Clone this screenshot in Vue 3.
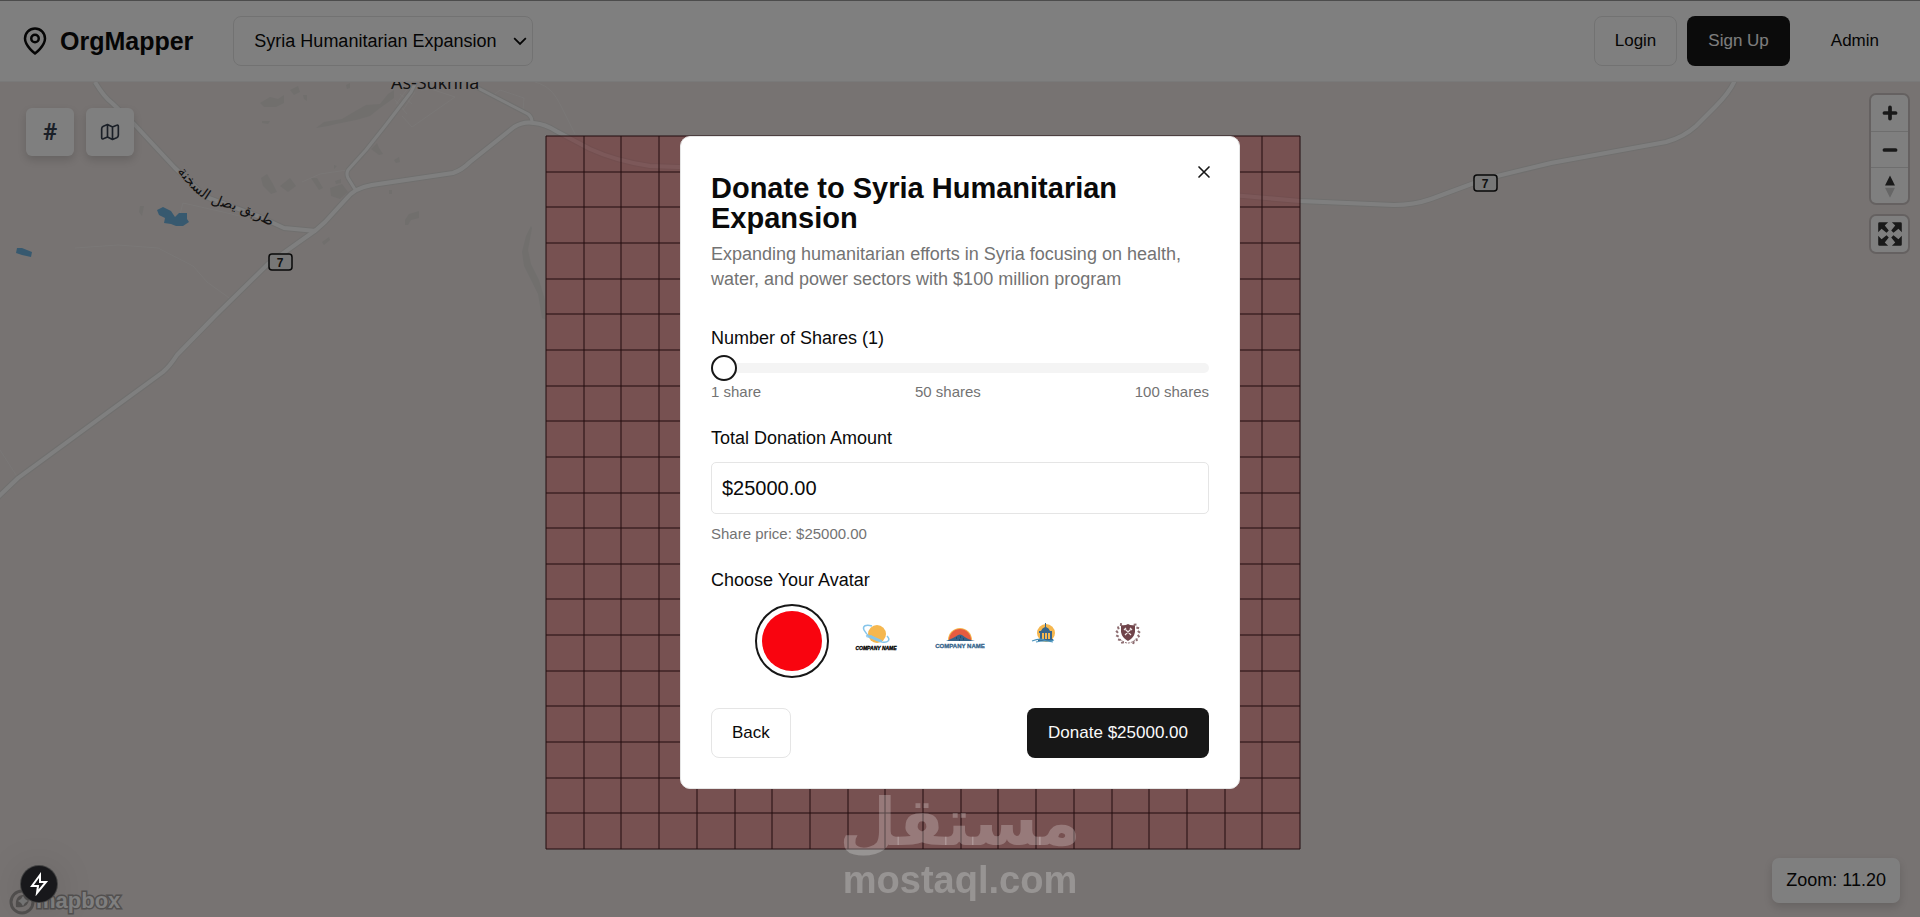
<script setup>
import { ref, computed } from 'vue'

const sharePrice = 25000
const shares = ref(1)
const avatar = ref('red')
const project = ref('Syria Humanitarian Expansion')
const avatars = [
  { id: 'red', name: 'Red circle' },
  { id: 'planet', name: 'Planet' },
  { id: 'sunrise', name: 'Sunrise' },
  { id: 'capitol', name: 'Capitol' },
  { id: 'crest', name: 'Crest' },
]
const total = computed(() => `$${(shares.value * sharePrice).toFixed(2)}`)

const grid = { x: 546, y: 136, w: 754, h: 713, n: 20, rows: 20 }
const columns = Array.from({ length: grid.n + 1 }, (_, i) => Math.round(grid.x + (i * grid.w) / grid.n))
const rows = Array.from({ length: grid.rows + 1 }, (_, i) => Math.round(grid.y + (i * grid.h) / grid.rows))
const laurels = [-150, -128, -106, -84, -62, -40, 40, 62, 84, 106, 128, 150]
</script>

<template>
  <div class="page">
    <header class="topbar">
      <div class="brand">
        <svg class="pin" viewBox="0 0 24 24" aria-hidden="true">
          <path d="M20 10c0 6-8 12-8 12s-8-6-8-12a8 8 0 0 1 16 0Z" />
          <circle cx="12" cy="10" r="3" />
        </svg>
        <span>OrgMapper</span>
      </div>
      <div class="picker">
        <select v-model="project" aria-label="Project">
          <option>Syria Humanitarian Expansion</option>
        </select>
        <svg class="chevron" viewBox="0 0 24 24" aria-hidden="true"><path d="M2 7l10 10L22 7" /></svg>
      </div>
      <nav class="account">
        <button class="btn outline">Login</button>
        <button class="btn solid">Sign Up</button>
        <button class="btn ghost">Admin</button>
      </nav>
    </header>

    <main class="map">
      <svg class="canvas" viewBox="0 82 1920 835" preserveAspectRatio="xMidYMid slice" role="img" aria-label="Map">
        <g class="terrain">
          <path d="M260 103l10-6 8 2 6-4v8l-8 4-12 0zM290 90l8-4 2 6-6 3zM303 95l4 0 0 6-3-2zM346 85l4-2 0 5-3 1zM262 121l8 0-2 3-6-1zM316 128l8-6 18-3 10-6 14-8 14-1 8-10 6-4 0 8-14 10-10 8-14 4-20 4-8 2zM261 178l6-4 6 10 4 8-6 2-8-8zM280 186l10-8 6 8-8 6zM311 178l6 0 6 10-4 2zM330 188l12-4 6 8-8 7-9-3zM371 149l6-6 2 5 4 6-4 1zM394 160l5-3 1 5-4 1zM334 165l3 1-3 3zM389 190l3 0 0 4-3 0zM405 220l4-6 10-3 0 7-8 2-3 5-3 0zM322 242l7-5 1 3-6 5zM140 206l4 0-2 10-3-4zM335 181l6-2 0 4-5 1z" />
          <path d="M531 226l-5 10-4 16 2 14 8 16 6 12 4 24 4 2-1-20-6-20-8-16-3-14 4-22z" />
        </g>
        <g class="lane">
          <path d="M535 82c14 4 20 12 26 24l14 28M402 116l10 11 43-30-24-8-10 1M478 88l14 8 8-6 24 8-1 12-8-4M302 182l18-8 27-4M180 214l3-11 40 9 42 10M75 248l43-3 40 3 35 18 14 16 25 18M0 450l18 28M395 100l12 14M400 94l12 10M408 88l-12 16M415 92l-12 18" />
        </g>
        <g v-for="layer in ['casing', 'road']" :key="layer" :class="layer">
          <g class="minor">
            <path d="M416 82 411 92 385 126 366 150 348 170 Q346 174 348 178L356 191" />
            <path d="M470 82 478 88 528 114 Q532 117 532 122" />
          </g>
          <path d="M95 82 Q104 97 112 103L135 125 175 168 206 197 258 216 284 228 316 231" />
          <path d="M-4 499 18 478 163 372 Q170 366 177 355L216 315 268 264 316 230 325 222 346 199 Q354 188 372 185L453 173 Q462 170 470 162L514 127 Q524 121 534 123 545 124 556 131L590 149 Q616 161 650 166L1060 180 1300 201 1394 205 Q1414 205 1431 199L1485 179 1551 163 1666 142 Q1684 137 1696 126L1715 107 Q1730 92 1735 80" />
        </g>
        <path class="water" d="M157 210l6-3 8 4 4 6 4-4 8 0 0 6 2 3-6 4-7 0-5-2-7-1 1-5-6-3zM17 248l5 0 10 4-1 5-9-2-6-2z" />
        <g class="place">
          <text x="391" y="89">As-Sukhna</text>
        </g>
        <path id="road-name" class="guide" d="M168 158 Q196 202 223 207T290 238" />
        <text class="road-label"><textPath href="#road-name" startOffset="48%" text-anchor="middle">طريق يصل السخنة</textPath></text>
        <g class="cells">
          <rect :x="grid.x" :y="grid.y" :width="grid.w" :height="grid.h" />
          <line v-for="x in columns" :key="`c${x}`" :x1="x" :x2="x" :y1="grid.y" :y2="grid.y + grid.h" />
          <line v-for="y in rows" :key="`r${y}`" :x1="grid.x" :x2="grid.x + grid.w" :y1="y" :y2="y" />
        </g>
        <g class="shield">
          <rect x="269" y="254" width="23" height="16" rx="3" />
          <text x="280" y="267">7</text>
          <rect x="1474" y="175" width="23" height="16" rx="3" />
          <text x="1485" y="188">7</text>
        </g>
      </svg>

      <div class="tools">
        <button class="tool" aria-label="Toggle grid">#</button>
        <button class="tool" aria-label="Map style">
          <svg viewBox="0 0 24 24" aria-hidden="true">
            <path d="M9 3 4 5Q2 6 2 8V19Q2 21 4 20L9 18 15 21 20 19Q22 18 22 16V5Q22 3 20 4L15 6zM9 3V18M15 6V21" />
          </svg>
        </button>
      </div>

      <div class="controls">
        <div class="group">
          <button aria-label="Zoom in"><svg viewBox="0 0 29 29"><path class="thick" d="M14.5 10v9M10 14.5h9" /></svg></button>
          <button aria-label="Zoom out"><svg viewBox="0 0 29 29"><path class="thick" d="M10 14.5h9" /></svg></button>
          <button aria-label="Reset north">
            <svg viewBox="0 0 29 29"><path d="M10.5 14l4-8 4 8z" /><path class="pale" d="M10.5 16l4 8 4-8z" /></svg>
          </button>
        </div>
        <div class="group">
          <button aria-label="Fullscreen">
            <svg viewBox="0 0 29 29">
              <g v-for="turn in [0, 90, 180, 270]" :key="turn" :transform="`rotate(${turn} 14.5 14.5)`">
                <path d="M5 6q0-1 1-1h7l-2.700 2.700 3.200 4-1.800 1.800-4-3.200L5 13z" />
              </g>
            </svg>
          </button>
        </div>
      </div>

      <div class="zoom-level">Zoom: 11.20</div>

      <svg class="mapbox" viewBox="0 0 120 30" role="img" aria-label="mapbox">
        <circle class="ring" cx="14" cy="15" r="11" />
        <path class="mark" d="M8 20c-1-8 2-12 7-12 5 0 7 4 5 8-2 4-7 5-12 4z" />
        <path class="star" d="M15 9l2 3 3 2-3 2-2 3-2-3-3-2 3-2z" />
        <text x="28" y="21">mapbox</text>
      </svg>
    </main>

    <div class="overlay">
      <section class="dialog" role="dialog" aria-modal="true" aria-labelledby="dialog-title">
        <button class="close" aria-label="Close">
          <svg viewBox="0 0 24 24"><path d="M18 6 6 18M6 6l12 12" /></svg>
        </button>
        <h2 id="dialog-title">Donate to Syria Humanitarian Expansion</h2>
        <p class="lead">Expanding humanitarian efforts in Syria focusing on health, water, and power sectors with $100 million program</p>

        <div class="field shares">
          <label for="shares">Number of Shares ({{ shares }})</label>
          <input id="shares" v-model.number="shares" type="range" min="1" max="100" />
          <div class="ticks"><span>1 share</span><span>50 shares</span><span>100 shares</span></div>
        </div>

        <div class="field amount">
          <label for="amount">Total Donation Amount</label>
          <input id="amount" type="text" :value="total" readonly />
          <p class="hint">Share price: ${{ sharePrice.toFixed(2) }}</p>
        </div>

        <fieldset class="field">
          <legend>Choose Your Avatar</legend>
          <div class="avatars">
            <label v-for="a in avatars" :key="a.id" class="avatar" :class="{ chosen: avatar === a.id }">
              <input v-model="avatar" type="radio" name="avatar" :value="a.id" :aria-label="a.name" />
              <svg viewBox="0 0 60 60" aria-hidden="true">
                <circle v-if="a.id === 'red'" cx="30" cy="30" r="30" fill="#f9040f" />
                <g v-else-if="a.id === 'planet'">
                  <circle cx="31" cy="23" r="9" fill="#f5b74f" />
                  <path d="M26 15c-6-2-10 0-8 4 3 6 10 10 18 12 6 1 9-2 5-6M20 25c4-1 9 2 16 5" fill="none" stroke="#86c5ea" stroke-width="1.5" />
                  <path d="M20 26l5-2 5 3-3 1z" fill="#86c5ea" />
                  <text x="30" y="39" class="logo-name slanted">COMPANY NAME</text>
                </g>
                <g v-else-if="a.id === 'sunrise'">
                  <path d="M18 29a12 12 0 0 1 24 0z" fill="#f5b74f" />
                  <path d="M19 29a11 11 0 0 1 22 0z" fill="#e65c40" />
                  <path d="M16 30q8-3 12-6 2-1 4 0 6 5 13 6z" fill="#36648b" />
                  <path d="M26 27h1M30 26h1M33 28h1M29 29h1" stroke="#16324c" />
                  <text x="30" y="37" class="logo-name wide">COMPANY NAME</text>
                </g>
                <g v-else-if="a.id === 'capitol'">
                  <circle cx="32" cy="22" r="9" fill="#f5b74f" />
                  <path d="M31 12h1v4q3 1 4 4h-9q1-3 4-4zM25 20h13v2H25zM26 22h2v7h-2zM30 22h1v7h-1zM33 22h1v7h-1zM36 22h2v7h-2zM24 28h15v2H24z" fill="#36648b" />
                  <path d="M18 30q8-3 12-1t10 0M22 31q8-2 17 0" fill="none" stroke="#4b94bd" stroke-width="1.2" />
                </g>
                <g v-else>
                  <path d="M23 14q4 1 7-1 3 2 7 1v7q-1 6-7 9-6-3-7-9z" fill="#70444a" />
                  <path d="M27 18l6 6M33 18l-6 6M28 17l-2 2M32 17l2 2" stroke="#f0e7e7" stroke-width="1.2" />
                  <path v-for="turn in laurels" :key="turn" :transform="`rotate(${turn} 30 22)`" d="M29 12l2-2" stroke="#8d6d71" stroke-width="2" />
                  <path d="M22 28q8 8 16 0" fill="none" stroke="#8d6d71" stroke-dasharray="2 1" />
                </g>
              </svg>
            </label>
          </div>
        </fieldset>

        <footer class="actions">
          <button class="btn outline">Back</button>
          <button class="btn solid">Donate {{ total }}</button>
        </footer>
      </section>
    </div>

    <button class="bolt" aria-label="Route status">
      <svg viewBox="0 0 24 24"><path d="M13 3 5 14h6l-1 7L19 10h-6z" /></svg>
    </button>

    <div class="watermark" aria-hidden="true">
      <span class="arabic" lang="ar">مستقل</span>
      <span class="latin">mostaql.com</span>
    </div>
  </div>
</template>

<style>
body {
  margin: 0;
}
</style>

<style scoped>
* {
  box-sizing: border-box;
}
.page {
  position: relative;
  display: flex;
  flex-direction: column;
  min-height: 100vh;
  overflow: hidden;
  font-family: "Liberation Sans", Arial, sans-serif;
  font-size: 18px;
  color: #0a0a0a;
}
button,
select,
input {
  font: inherit;
  color: inherit;
}
svg {
  display: block;
}
.topbar {
  position: relative;
  z-index: 1;
  display: flex;
  align-items: center;
  height: 82px;
  padding: 0 20px;
  background: #fff;
  border-top: 1px solid #999;
  border-bottom: 1px solid #f2f2f2;
}
.brand {
  display: flex;
  align-items: center;
  gap: 10px;
  font-size: 25px;
  font-weight: 700;
}
.pin {
  width: 30px;
  height: 30px;
  fill: none;
  stroke: currentColor;
  stroke-width: 2;
  stroke-linejoin: round;
}
.picker {
  position: relative;
  width: 300px;
  margin-left: 40px;
}
.picker select {
  appearance: none;
  width: 100%;
  height: 50px;
  padding: 0 20px;
  background: #fff;
  border: 1px solid #e5e5e5;
  border-radius: 8px;
}
.chevron {
  position: absolute;
  top: 18px;
  right: 6px;
  width: 14px;
  height: 14px;
  fill: none;
  stroke: #0a0a0a;
  stroke-width: 3;
  pointer-events: none;
}
.account {
  display: flex;
  gap: 10px;
  margin-left: auto;
}
.account .ghost {
  margin-left: 10px;
}
.btn {
  height: 50px;
  padding: 0 20px;
  border: 1px solid transparent;
  border-radius: 8px;
  background: transparent;
  font-size: 17px;
}
.outline {
  background: #fff;
  border-color: #e5e5e5;
}
.solid {
  background: #171717;
  color: #fafafa;
}
.map {
  position: relative;
  flex: 1;
  background: #eee6e4;
}
.canvas {
  position: absolute;
  inset: 0;
  width: 100%;
  height: 100%;
}
.terrain {
  fill: #e2dedb;
}
.lane {
  fill: none;
  stroke: #faf7f5;
  stroke-width: 1;
  opacity: 0.5;
}
.casing,
.road {
  fill: none;
  stroke-linejoin: round;
}
.casing {
  stroke: #e0dfdd;
  stroke-width: 6;
}
.road {
  stroke: #fff;
  stroke-width: 4;
}
.casing .minor {
  stroke-width: 5;
}
.road .minor {
  stroke-width: 3;
}
.water {
  fill: #6fb2de;
}
.place text,
.road-label {
  paint-order: stroke;
  stroke: #eee6e4;
  stroke-width: 2;
  fill: #222;
}
.place {
  font: 18px "Open Sans", sans-serif;
}
.guide {
  fill: none;
}
.road-label {
  font: 14px "DejaVu Sans", sans-serif;
}
.cells rect {
  fill: rgba(238, 60, 65, 0.4);
}
.cells line {
  stroke: #45181c;
  stroke-width: 1;
}
.shield rect {
  fill: #eee;
  stroke: #111;
  stroke-width: 1.5;
}
.shield text {
  font: bold 12px "Liberation Sans", sans-serif;
  text-anchor: middle;
  fill: #222;
}
.tools {
  position: absolute;
  top: 26px;
  left: 26px;
  display: flex;
  gap: 12px;
}
.tool {
  display: grid;
  place-items: center;
  width: 48px;
  height: 48px;
  padding: 0;
  border: 0;
  border-radius: 6px;
  background: #fff;
  color: #374151;
  font-family: Roboto, sans-serif;
  font-size: 24px;
  font-weight: 700;
  box-shadow: 0 4px 8px rgba(0, 0, 0, 0.14);
}
.tool svg {
  width: 20px;
  height: 20px;
  fill: none;
  stroke: currentColor;
  stroke-width: 2;
  stroke-linejoin: round;
}
.controls {
  position: absolute;
  top: 13px;
  right: 12px;
  display: flex;
  flex-direction: column;
  gap: 13px;
}
.group {
  width: 37px;
  border-radius: 5px;
  background: #fff;
  box-shadow: 0 0 0 2px rgba(0, 0, 0, 0.15);
}
.group button {
  display: block;
  width: 100%;
  height: 36px;
  padding: 0;
  border: 0;
  background: transparent;
}
.group button + button {
  border-top: 1px solid #ddd;
}
.group svg {
  width: 36px;
  height: 36px;
  margin: 0 auto;
  fill: #333;
}
.group .thick {
  fill: none;
  stroke: #333;
  stroke-width: 3;
  stroke-linecap: round;
}
.group .pale {
  fill: #ccc;
}
.zoom-level {
  position: absolute;
  right: 20px;
  bottom: 14px;
  padding: 10px 14px;
  border-radius: 7px;
  background: #fff;
  line-height: 25px;
  box-shadow: 0 4px 8px rgba(0, 0, 0, 0.14);
}
.mapbox {
  position: absolute;
  left: 8px;
  bottom: 0;
  width: 120px;
  height: 30px;
}
.mapbox .ring {
  fill: #eee6e4;
  stroke: #a5a09f;
  stroke-width: 3;
}
.mapbox .mark {
  fill: #a5a09f;
}
.mapbox .star {
  fill: #eee;
}
.mapbox text {
  font: bold 22px "Liberation Sans", sans-serif;
  fill: #fff;
  stroke: #a5a09f;
  stroke-width: 3;
  paint-order: stroke;
}
.overlay {
  position: fixed;
  inset: 0;
  z-index: 2;
  display: flex;
  align-items: center;
  justify-content: center;
  padding-top: 8px;
  background: rgba(0, 0, 0, 0.5);
}
.dialog {
  position: relative;
  width: 560px;
  padding: 36px 30px 30px;
  background: #fff;
  border: 1px solid #e5e5e5;
  border-radius: 10px;
}
.close {
  position: absolute;
  top: 25px;
  right: 25px;
  padding: 0;
  border: 0;
  background: transparent;
}
.close svg {
  width: 20px;
  height: 20px;
  fill: none;
  stroke: #171717;
  stroke-width: 2;
  stroke-linecap: round;
}
h2 {
  margin: 0;
  font-size: 29px;
  font-weight: 700;
  line-height: 30px;
}
.lead {
  margin: 9px 0 0;
  color: #737373;
  line-height: 25px;
}
.field {
  min-width: 0;
  margin: 0;
  padding: 0;
  border: 0;
}
.field > label,
legend {
  display: block;
  padding: 0;
  line-height: 18px;
}
.shares {
  margin-top: 37px;
}
input[type="range"] {
  appearance: none;
  display: block;
  width: 100%;
  height: 25px;
  margin: 8px 0 2px;
  background: transparent;
}
input[type="range"]::-webkit-slider-runnable-track {
  height: 10px;
  border-radius: 5px;
  background: #f4f4f4;
}
input[type="range"]::-webkit-slider-thumb {
  appearance: none;
  width: 26px;
  height: 26px;
  margin-top: -8px;
  border: 2px solid #171717;
  border-radius: 50%;
  background: #fff;
}
.ticks {
  display: flex;
  justify-content: space-between;
}
.ticks,
.hint {
  color: #737373;
  font-size: 15px;
  line-height: 20px;
}
.amount {
  margin: 27px 0;
}
input[type="text"] {
  display: block;
  width: 100%;
  height: 52px;
  margin-top: 15px;
  padding: 0 10px;
  border: 1px solid #e5e5e5;
  border-radius: 5px;
  background: #fff;
  font-size: 20px;
}
.hint {
  margin: 10px 0 0;
}
.avatars {
  display: flex;
  justify-content: center;
  gap: 10px;
  margin-top: 15px;
}
.avatar {
  position: relative;
  display: grid;
  place-items: center;
  width: 74px;
  height: 74px;
  border: 2px solid transparent;
  border-radius: 50%;
}
.avatar.chosen {
  border-color: #171717;
}
.avatar input {
  position: absolute;
  inset: 0;
  margin: 0;
  opacity: 0;
}
.avatar svg {
  width: 60px;
  height: 60px;
}
.logo-name {
  font: bold 5px "Liberation Sans", sans-serif;
  text-anchor: middle;
}
.slanted {
  font-style: italic;
  stroke: #000;
  stroke-width: 0.3;
}
.wide {
  font-size: 6px;
  fill: #36648b;
  stroke: #36648b;
  stroke-width: 0.3;
}
.actions {
  display: flex;
  justify-content: space-between;
  margin-top: 30px;
}
.bolt {
  position: fixed;
  left: 21px;
  bottom: 15px;
  z-index: 3;
  display: grid;
  place-items: center;
  width: 36px;
  height: 36px;
  padding: 0;
  border: 0;
  border-radius: 50%;
  background: #18181b;
  box-shadow: 0 0 0 1px #444, 0 4px 40px rgba(0, 0, 0, 0.16);
}
.bolt svg {
  width: 24px;
  height: 24px;
  fill: none;
  stroke: #fff;
  stroke-width: 2;
}
.watermark {
  position: fixed;
  right: 0;
  bottom: 16px;
  left: 0;
  z-index: 3;
  display: flex;
  flex-direction: column;
  align-items: center;
  color: rgba(255, 255, 255, 0.24);
  font-weight: 700;
  pointer-events: none;
}
.arabic {
  font-family: "DejaVu Sans", sans-serif;
  font-size: 66px;
  line-height: 72px;
}
.latin {
  font-size: 38px;
  line-height: 42px;
}
</style>
